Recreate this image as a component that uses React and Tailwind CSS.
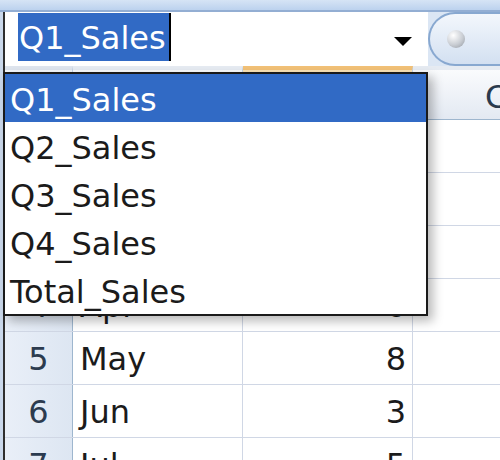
export default function App() {
  const rows = [
    { n: 1, m: 'Jan', v: '4' },
    { n: 2, m: 'Feb', v: '7' },
    { n: 3, m: 'Mar', v: '2' },
    { n: 4, m: 'Apr', v: '6' },
    { n: 5, m: 'May', v: '8' },
    { n: 6, m: 'Jun', v: '3' },
    { n: 7, m: 'Jul', v: '5' },
  ];
  const items = ['Q1_Sales', 'Q2_Sales', 'Q3_Sales', 'Q4_Sales', 'Total_Sales'];
  return (
    <div className="relative w-[500px] h-[460px] overflow-hidden bg-white font-['DejaVu_Sans',sans-serif] text-[32px] text-[#1b1b1b]">
      <div className="h-[12px] bg-gradient-to-b from-[#d6e4f5] to-[#bcd2ee] border-b-2 border-[#93aed3]" />
      <div className="flex h-[448px] overflow-hidden">
        <div className="w-[3px] shrink-0 bg-[#cad8eb]" />
        <div className="w-[2px] shrink-0 bg-[#2e2e2e]" />
        <div className="flex-1 flex flex-col overflow-hidden">
          {/* formula row */}
          <div className="flex h-[54px] shrink-0">
            <div className="relative w-[423px] bg-white">
              <div className="absolute left-[13px] top-[1px] h-[48px] w-[152px] bg-[#316ac5] text-white leading-[48px] pl-[1px] pt-[1px] whitespace-nowrap">
                Q1_Sales
              </div>
              <div className="absolute left-[164px] top-[1px] h-[48px] w-[2px] bg-black" />
              <svg className="absolute left-[388px] top-[24px]" width="20" height="11" viewBox="0 0 20 11">
                <polygon points="1,1 19,1 10,10" fill="#000" />
              </svg>
            </div>
            <div className="flex-1 bg-[#dbe6f4] flex">
              <div className="flex-1 rounded-l-[27px] border-2 border-r-0 border-[#88a8d0] bg-gradient-to-b from-[#f3f7fc] to-[#d3e0f1] flex items-center pl-[17px]">
                <div className="w-[18px] h-[18px] rounded-full bg-[radial-gradient(circle_at_35%_30%,#ffffff,#c9cdd3_55%,#8f959d)]" />
              </div>
            </div>
          </div>
          {/* column header row */}
          <div className="flex h-[54px] shrink-0 border-b border-[#9eb6ce]">
            <div className="w-[68px] border-t-4 border-[#dfe5ee] bg-gradient-to-b from-[#f4f7fb] to-[#dfe7f2] border-r border-r-[#c5d3e3]" />
            <div className="w-[170px] border-t-4 border-[#e6ebf2] bg-gradient-to-b from-[#f9fbfd] to-[#e1e8f2] border-r border-r-[#c5d3e3]" />
            <div className="w-[170px] border-t-4 border-[#f2c177] bg-gradient-to-b from-[#fbe3b5] to-[#f7c978] border-r border-r-[#c5d3e3]" />
            <div className="flex-1 border-t-4 border-[#e6ebf2] bg-gradient-to-b from-[#fafbfd] to-[#e3e9f2] relative overflow-hidden">
              <span className="absolute left-[72px] top-[5px] leading-[44px] text-[#2a3a4e]">C</span>
            </div>
          </div>
          {rows.map((r) => (
            <div key={r.n} className="flex h-[53px] shrink-0 border-b border-[#d0d7e5]">
              <div className="w-[68px] bg-gradient-to-r from-[#e9eff8] to-[#dde6f2] border-r border-[#9eb6ce] flex items-center justify-center text-[#2c3b4f] pt-[2px]">
                {r.n}
              </div>
              <div className="w-[170px] border-r border-[#d0d7e5] flex items-center pl-[7px] pt-[2px]">{r.m}</div>
              <div className="w-[170px] border-r border-[#d0d7e5] flex items-center justify-end pr-[6px] pt-[2px]">{r.v}</div>
              <div className="flex-1" />
            </div>
          ))}
        </div>
      </div>
      {/* dropdown */}
      <div className="absolute left-[3px] top-[72px] w-[425px] border-2 border-[#1a1a1a] bg-white shadow-[5px_5px_10px_rgba(0,0,0,0.28)]">
        {items.map((t, i) => (
          <div
            key={t}
            className={
              i === 0
                ? 'h-[48px] leading-[48px] pl-[5px] pt-[2px] bg-[#316ac5] text-white'
                : 'h-[48px] leading-[48px] pl-[5px] pt-[2px] text-[#1b1b1b]'
            }
          >
            {t}
          </div>
        ))}
      </div>
    </div>
  );
}
